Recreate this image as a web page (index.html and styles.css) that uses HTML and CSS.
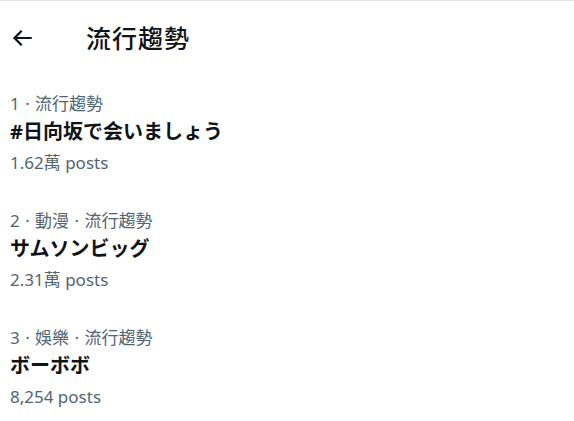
FILE: index.html
```html
<!DOCTYPE html>
<html lang="zh-Hant">
<head>
  <meta charset="UTF-8" />
  <meta name="viewport" content="width=device-width, initial-scale=1.0" />
  <title>流行趨勢</title>
  <link rel="stylesheet" href="styles.css">
</head>
<body>
  <header class="topbar">
    <button class="back" aria-label="Back">
      <svg viewBox="0 0 24 24" width="26" height="26"><path d="M7.414 13l5.043 5.04-1.414 1.42L3.586 12l7.457-7.46 1.414 1.42L7.414 11H21v2H7.414z"/></svg>
    </button>
    <h1 class="title">流行趨勢</h1>
  </header>

  <section class="trends">
    <div class="trend">
      <div class="meta">1 · 流行趨勢</div>
      <div class="name">#日向坂で会いましょう</div>
      <div class="count">1.62萬 posts</div>
    </div>
    <div class="trend">
      <div class="meta">2 · 動漫 · 流行趨勢</div>
      <div class="name">サムソンビッグ</div>
      <div class="count">2.31萬 posts</div>
    </div>
    <div class="trend">
      <div class="meta">3 · 娛樂 · 流行趨勢</div>
      <div class="name">ボーボボ</div>
      <div class="count">8,254 posts</div>
    </div>
  </section>
</body>
</html>
```

FILE: styles.css
```css
body {
  margin: 0;
  background: #fff;
  color: #0f1419;
  font-family: "Noto Sans", "Noto Sans CJK TC", sans-serif;
  border-top: 1px solid #e1e1e1;
}
.topbar {
  display: flex;
  align-items: center;
  height: 74px;
}
.back {
  display: flex;
  align-items: center;
  justify-content: center;
  background: none;
  border: none;
  padding: 0;
  margin-left: 9px;
  width: 26px;
  height: 26px;
}
.back svg {
  fill: #0f1419;
}
.title {
  margin: 0 0 0 51px;
  font-size: 25px;
  font-weight: 500;
  line-height: 30px;
  letter-spacing: 1px;
}
.trend {
  padding: 15px 10px;
}
.meta {
  color: #536471;
  font-size: 17px;
  line-height: 28px;
  word-spacing: 1px;
}
.name {
  font-size: 20px;
  font-weight: 700;
  line-height: 28px;
}
.count {
  margin-top: 2px;
  color: #536471;
  font-size: 17px;
  line-height: 29px;
}
```
